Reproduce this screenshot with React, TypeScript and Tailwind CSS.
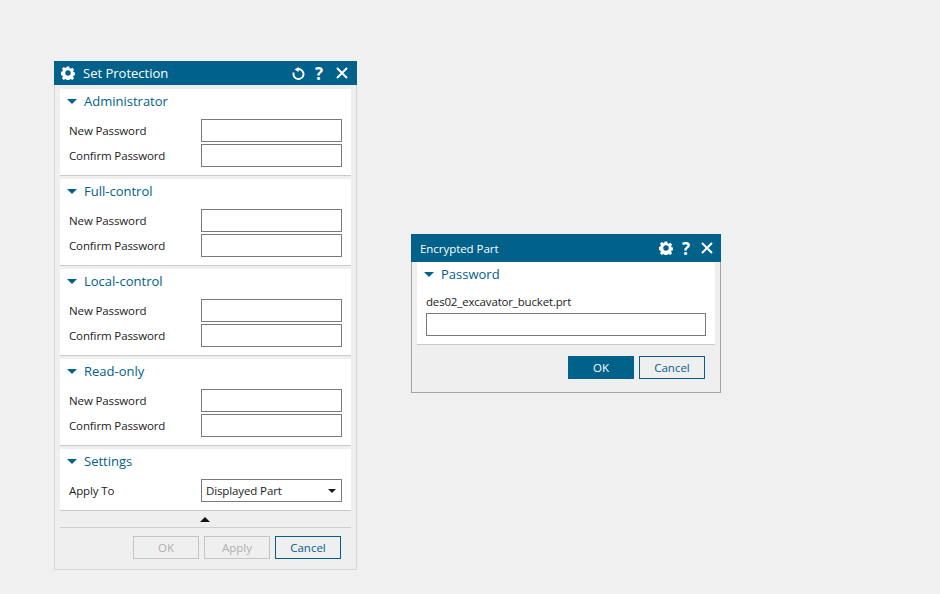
import React from 'react';

const FONT = "font-['Open_Sans','Noto_Sans',sans-serif]";

function GearIcon() {
  return (
    <svg width="14" height="14" viewBox="0 0 16 16" className="block">
      <path
        fill="#fff"
        fillRule="evenodd"
        d="M6.6 0.6h2.8l.4 2 1.3.6 1.8-1.1 2 2-1.1 1.8.6 1.3 2 .4v2.8l-2 .4-.6 1.3 1.1 1.8-2 2-1.8-1.1-1.3.6-.4 2H6.6l-.4-2-1.3-.6-1.8 1.1-2-2 1.1-1.8-.6-1.3-2-.4V6.6l2-.4.6-1.3-1.1-1.8 2-2 1.8 1.1 1.3-.6zM8 4.9a3.1 3.1 0 1 0 0 6.2 3.1 3.1 0 0 0 0-6.2z"
      />
    </svg>
  );
}

function ResetIcon() {
  return (
    <svg width="13" height="13" viewBox="0 0 13 13" className="block" fill="none">
      <path d="M4.2 2.6a5 5 0 1 1-2.5 3" stroke="#fff" strokeWidth="1.9" />
      <path d="M6.6 0v5L2.6 2.6z" fill="#fff" />
    </svg>
  );
}

function CloseIcon() {
  return (
    <svg width="12" height="12" viewBox="0 0 12 12" className="block" fill="none">
      <path d="M1 1l10 10M11 1L1 11" stroke="#fff" strokeWidth="2" />
    </svg>
  );
}

function HelpMark() {
  return <span className="w-[12px] text-center text-[17px] font-bold leading-none text-white">?</span>;
}

function SectionHeader({ title }: { title: string }) {
  return (
    <div className="flex h-[25px] items-center pl-[7px]">
      <svg width="10" height="5" viewBox="0 0 10 5" className="block">
        <path d="M0 0h10L5 5z" fill="#00618a" />
      </svg>
      <span className="ml-[7px] text-[13px] text-[#00618a]">{title}</span>
    </div>
  );
}

function PasswordRow({ label }: { label: string }) {
  return (
    <div className="flex h-[23px] items-center justify-between px-[9px]">
      <span className="text-[11.5px] tracking-[-0.12px] text-[#1c1c1c]">{label}</span>
      <input type="text" className="h-[23px] w-[141px] border border-[#7a7a7a] bg-white outline-none" />
    </div>
  );
}

function PasswordSection({ title }: { title: string }) {
  return (
    <section className="mb-[3px] h-[87px] border-b border-[#c9c9c9] bg-white">
      <SectionHeader title={title} />
      <div className="mt-[5px] flex flex-col gap-[2px]">
        <PasswordRow label="New Password" />
        <PasswordRow label="Confirm Password" />
      </div>
    </section>
  );
}

function DialogButton({ label, variant }: { label: string; variant: 'primary' | 'outline' | 'disabled' }) {
  const styles = {
    primary: 'border-[#00618a] bg-[#00618a] text-white',
    outline: 'border-[#00618a] bg-[#efefef] text-[#00618a]',
    disabled: 'border-[#c4c4c4] bg-[#efefef] text-[#b0b0b0]',
  };
  return (
    <button className={`h-[23px] w-[66px] border text-[11.5px] leading-none ${styles[variant]}`}>{label}</button>
  );
}

function SetProtectionDialog() {
  return (
    <div className="h-[509px] w-[303px] border border-t-0 border-[#d6d6d6] bg-[#efefef]">
      <div className="mx-[-1px] flex h-[24px] items-center bg-[#00618a] pl-[7px] pr-[9px]">
        <GearIcon />
        <span className="ml-[8px] flex-1 pt-[1px] text-[13px] text-white">Set Protection</span>
        <div className="flex items-center gap-[8px]">
          <ResetIcon />
          <HelpMark />
          <span className="ml-[3px]">
            <CloseIcon />
          </span>
        </div>
      </div>
      <div className="mx-[5px] pt-[4px]">
        <PasswordSection title="Administrator" />
        <PasswordSection title="Full-control" />
        <PasswordSection title="Local-control" />
        <PasswordSection title="Read-only" />
        <section className="h-[62px] border-b border-[#c9c9c9] bg-white">
          <SectionHeader title="Settings" />
          <div className="mt-[5px] flex h-[23px] items-center justify-between px-[9px]">
            <span className="text-[11.5px] tracking-[-0.12px] text-[#1c1c1c]">Apply To</span>
            <div className="flex h-[23px] w-[141px] items-center justify-between border border-[#7a7a7a] bg-white pl-[4px] pr-[5px]">
              <span className="text-[11.5px] tracking-[-0.12px] text-[#1c1c1c]">Displayed Part</span>
              <svg width="8" height="4" viewBox="0 0 8 4" className="block">
                <path d="M0 0h8L4 4z" fill="#1c1c1c" />
              </svg>
            </div>
          </div>
        </section>
        <div className="flex h-[17px] items-center justify-center border-b border-[#cfcfcf] pr-[1px]">
          <svg width="10" height="5" viewBox="0 0 10 5" className="block">
            <path d="M5 0l5 5H0z" fill="#111" />
          </svg>
        </div>
        <div className="flex justify-end gap-[5px] pr-[10px] pt-[8px]">
          <DialogButton label="OK" variant="disabled" />
          <DialogButton label="Apply" variant="disabled" />
          <DialogButton label="Cancel" variant="outline" />
        </div>
      </div>
    </div>
  );
}

function EncryptedPartDialog() {
  return (
    <div className="h-[159px] w-[310px] border border-t-0 border-[#a3a3a3] bg-[#efefef]">
      <div className="mx-[-1px] flex h-[28px] items-center bg-[#00618a] pl-[9px] pr-[8px]">
        <span className="flex-1 pt-[2px] text-[11.5px] tracking-[-0.05px] text-white">Encrypted Part</span>
        <div className="flex items-center gap-[7px]">
          <span className="ml-[1px]">
            <GearIcon />
          </span>
          <HelpMark />
          <span className="ml-[2px]">
            <CloseIcon />
          </span>
        </div>
      </div>
      <section className="mx-[5px] h-[83px] border-b border-[#c9c9c9] bg-white">
        <SectionHeader title="Password" />
        <div className="mt-[3px] pl-[9px] text-[11.5px] leading-[23px] tracking-[-0.17px] text-[#1c1c1c]">
          des02_excavator_bucket.prt
        </div>
        <div className="px-[9px]">
          <input type="text" className="block h-[23px] w-full border border-[#7a7a7a] bg-white outline-none" />
        </div>
      </section>
      <div className="flex justify-end gap-[5px] pr-[15px] pt-[11px]">
        <DialogButton label="OK" variant="primary" />
        <DialogButton label="Cancel" variant="outline" />
      </div>
    </div>
  );
}

export default function App() {
  return (
    <div className={`flex h-[594px] w-[940px] items-start overflow-hidden bg-[#f0f0f0] pl-[54px] pt-[61px] ${FONT}`}>
      <SetProtectionDialog />
      <div className="ml-[54px] mt-[173px]">
        <EncryptedPartDialog />
      </div>
    </div>
  );
}
